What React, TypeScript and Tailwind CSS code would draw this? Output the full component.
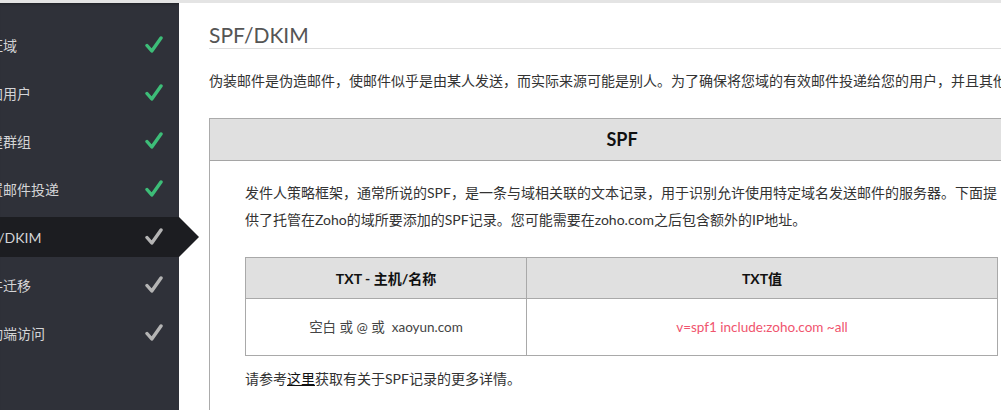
import React from "react";

const FONT = '"Lato", "Noto Sans CJK SC", sans-serif';

type Item = { label: string; done: boolean; active?: boolean };

const items: Item[] = [
  { label: "验证域", done: true },
  { label: "添加用户", done: true },
  { label: "创建群组", done: true },
  { label: "设置邮件投递", done: true },
  { label: "SPF/DKIM", done: false, active: true },
  { label: "邮件迁移", done: false },
  { label: "移动端访问", done: false },
];

function Check({ color }: { color: string }) {
  return (
    <svg width="18" height="18" viewBox="0 0 18 18" fill="none">
      <path
        d="M2 9.5 L6.8 15 L16 2"
        stroke={color}
        strokeWidth="3.4"
        strokeLinecap="round"
        strokeLinejoin="round"
      />
    </svg>
  );
}

export default function App() {
  return (
    <div
      className="w-[1001px] h-[410px] overflow-hidden flex flex-col bg-white"
      style={{ fontFamily: FONT }}
    >
      <div className="h-[3px] shrink-0 bg-[#e4e4e4]" />
      <div className="flex flex-1 min-h-0">
        <aside className="w-[179px] shrink-0 bg-[#2f3139] pt-[22px] flex flex-col gap-2 shadow-[inset_0_3px_3px_-2px_rgba(0,0,0,0.35)]">
          {items.map((it) => (
            <div
              key={it.label}
              className={`relative h-10 flex items-center justify-between pr-[16px] ${
                it.active ? "bg-[#1c1d21]" : ""
              }`}
            >
              <span className="ml-[-25px] whitespace-nowrap text-[14px] text-[#d4d4d6]">
                {it.label}
              </span>
              <Check color={it.done ? "#3dbd78" : "#b4b4b4"} />
              {it.active && (
                <div className="absolute right-[-20px] top-0 w-0 h-0 border-l-[20px] border-l-[#1c1d21] border-y-[20px] border-y-transparent" />
              )}
            </div>
          ))}
        </aside>
        <main className="flex-1 min-w-0 pl-[30px] overflow-hidden">
          <div className="w-[900px]">
            <div className="pt-[18px] text-[21px] leading-[27px] text-[#555] border-b border-[#dddddd]">
              SPF/DKIM
            </div>
            <p className="mt-[20px] text-[14px] leading-[24px] text-[#333] whitespace-nowrap">
              伪装邮件是伪造邮件，使邮件似乎是由某人发送，而实际来源可能是别人。为了确保将您域的有效邮件投递给您的用户，并且其他发件人无法冒充您的域
            </p>
          </div>
          <div className="mt-[25px] w-[826px] border border-[#ababab] pb-[40px]">
            <div className="h-[42px] bg-[#e0e0e0] border-b border-[#a5a5a5] flex items-center justify-center text-[18px] font-bold text-[#111]">
              SPF
            </div>
            <div className="px-[35px]">
              <p className="pt-[18px] text-[14px] leading-[27px] text-[#333] whitespace-nowrap">
                发件人策略框架，通常所说的SPF，是一条与域相关联的文本记录，用于识别允许使用特定域名发送邮件的服务器。下面提
                <br />
                供了托管在Zoho的域所要添加的SPF记录。您可能需要在zoho.com之后包含额外的IP地址。
              </p>
              <table className="mt-[24px] w-[753px] border-collapse text-[14px]">
                <thead>
                  <tr className="bg-[#e0e0e0]">
                    <th className="w-[281px] h-[41px] border border-[#a9a9a9] font-bold text-[#111]">
                      TXT - 主机/名称
                    </th>
                    <th className="h-[41px] border border-[#a9a9a9] font-bold text-[#111]">
                      TXT值
                    </th>
                  </tr>
                </thead>
                <tbody>
                  <tr>
                    <td className="h-[57px] border border-[#a9a9a9] text-center text-[13.5px] text-[#444]">
                      空白 或 @ 或&nbsp; xaoyun.com
                    </td>
                    <td className="h-[57px] border border-[#a9a9a9] text-center text-[13.5px] text-[#f0546e]">
                      v=spf1 include:zoho.com ~all
                    </td>
                  </tr>
                </tbody>
              </table>
              <p className="mt-[11px] text-[14px] leading-[24px] text-[#333]">
                请参考
                <span className="underline text-[#111]">这里</span>
                获取有关于SPF记录的更多详情。
              </p>
            </div>
          </div>
        </main>
      </div>
    </div>
  );
}
